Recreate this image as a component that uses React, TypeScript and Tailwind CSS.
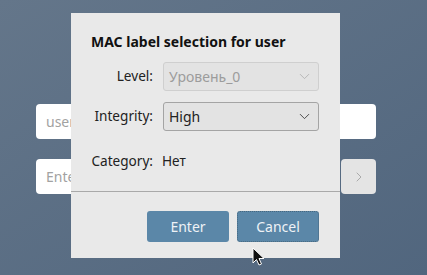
import { ChevronDown, ChevronRight } from "lucide-react";

const font = { fontFamily: '"Noto Sans", "Open Sans", sans-serif' };

function Combo({ value, disabled }: { value: string; disabled?: boolean }) {
    return (
        <div
            className={`flex items-center justify-between h-[29px] w-[156px] rounded-[3px] border bg-[#e3e3e3] pl-[5px] pr-[5px] ${
                disabled ? "border-[#cfcfcf] text-[#9c9c9c]" : "border-[#a4a4a4] text-[#222222]"
            }`}
        >
            <span className="text-[14px]">{value}</span>
            <ChevronDown size={17} strokeWidth={1.2} className={disabled ? "text-[#b0b0b0]" : "text-[#333333]"} />
        </div>
    );
}

export default function App() {
    return (
        <div className="relative w-[427px] h-[275px] overflow-hidden bg-gradient-to-br from-[#64768a] to-[#51667e]" style={font}>
            {/* login form behind the dialog */}
            <div className="flex flex-col gap-[20px] pt-[104px] pl-[36px] w-[376px]">
                <div className="h-[35px] w-[340px] rounded-[4px] bg-white flex items-center pl-[10px] text-[14px] text-[#a2a2a2]">user</div>
                <div className="flex gap-[5px] w-[340px]">
                    <div className="h-[35px] flex-1 rounded-[4px] bg-white flex items-center pl-[10px] text-[14px] text-[#a2a2a2]">Ente</div>
                    <div className="h-[35px] w-[35px] rounded-[4px] bg-[#e4e4e4] flex items-center justify-center">
                        <ChevronRight size={16} strokeWidth={1.2} className="text-[#9a9a9a]" />
                    </div>
                </div>
            </div>

            {/* MAC dialog */}
            <div className="absolute left-[71px] top-[13px] w-[269px] h-[245px] bg-[#e9e9e9] flex flex-col">
                <div className="border-b border-[#a9a9a9] pl-[20px] pr-[21px] pt-[20px] pb-[20px]">
                    <h1 className="font-bold text-[14px] leading-[18px] text-[#111111]">MAC label selection for user</h1>
                    <div className="grid grid-cols-[62px_156px] gap-x-[10px] gap-y-[11px] mt-[11px] items-center text-[13.6px] text-[#222222]">
                        <span className="text-right">Level:</span>
                        <Combo value="Уровень_0" disabled />
                        <span className="text-right">Integrity:</span>
                        <Combo value="High" />
                        <span className="text-right mt-[9px] leading-[20px] whitespace-nowrap">Category:</span>
                        <span className="mt-[9px] leading-[20px] -ml-[1px]">Нет</span>
                    </div>
                </div>
                <div className="flex justify-end gap-[8px] pr-[21px] pt-[19px]">
                    <button className="h-[31px] w-[82px] rounded-[3px] bg-[#5b87a8] text-[14px] text-[#eef2f6]">Enter</button>
                    <button className="h-[31px] w-[82px] rounded-[3px] bg-[#5b87a8] border border-dotted border-[#46677f] text-[14px] text-[#eef2f6]">Cancel</button>
                </div>
            </div>

            {/* mouse pointer */}
            <svg className="absolute left-[252px] top-[247px]" width="14" height="20" viewBox="0 0 14 20">
                <path d="M1 1 L1 16 L4.5 12.5 L7 18 L9.5 17 L7 11.5 L12 11.5 Z" fill="#111111" stroke="#ffffff" strokeWidth="1" strokeLinejoin="round" />
            </svg>
        </div>
    );
}
